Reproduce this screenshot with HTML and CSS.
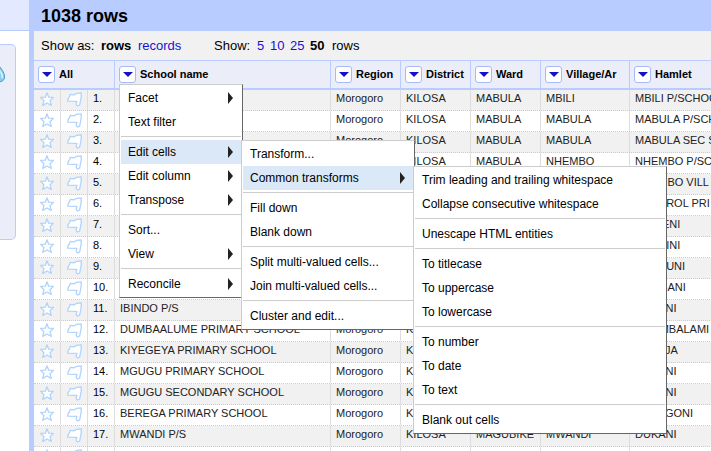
FILE: index.html
```html
<!DOCTYPE html>
<html lang="en">
<head>
<meta charset="utf-8">
<title>1038 rows</title>
<link rel="stylesheet" href="styles.css">
</head>
<body>
<svg class="defs" aria-hidden="true">
  <symbol id="star" viewBox="0 0 15 16"><path d="M7 .8 L8.700 5.200 L13.400 5.400 L10 8.700 L11.300 13.400 L7 11 L2.700 13.400 L4 8.700 L.6 5.400 L5.300 5.200 Z"/></symbol>
  <symbol id="flag" viewBox="0 0 15 16"><path d="M3.200 2.300 L7 2.900 L9.800 1.300 L14.200 .9 L14.200 5 L12.600 13.200 L10.500 14 L9.200 12.300 L9.900 9.400 L.7 9.200 L1.200 6.500 L2.600 4.700 Z"/></symbol>
</svg>
<div class="app">
  <aside class="side">
    <div class="side-top"></div>
    <div class="facet-box">
      <svg class="drop" viewBox="0 0 6 18"><path d="M-4 11 Q-2 6 0 1 Q5.500 8 4.500 12.500 Q3 16 -1 16" fill="#8fcdec" stroke="#4d9fcb"/><path d="M0 5 Q3 9 2 12" fill="none" stroke="#d9f2fc" stroke-width="1.500"/></svg>
    </div>
  </aside>
  <main class="main">
    <h1 class="title">1038 rows</h1>
    <div class="toolbar">
      <span class="label-as">Show as:</span><b class="mode">rows</b><a class="records">records</a>
      <span class="label-show">Show:</span><a class="n5">5</a><a class="n10">10</a><a class="n25">25</a><b class="n50">50</b><span>rows</span>
    </div>
    <div class="head">
      <div class="th"><i class="btn"></i>All</div>
      <div class="th"><i class="btn"></i>School name</div>
      <div class="th"><i class="btn"></i>Region</div>
      <div class="th"><i class="btn"></i>District</div>
      <div class="th"><i class="btn"></i>Ward</div>
      <div class="th"><i class="btn"></i>Village/Ar</div>
      <div class="th"><i class="btn"></i>Hamlet</div>
    </div>
    <div class="rows" id="rows"></div>
  </main>
</div>

<div class="menu menu-column">
  <div class="item sub">Facet</div>
  <div class="item">Text filter</div>
  <hr>
  <div class="item sub on">Edit cells</div>
  <div class="item sub">Edit column</div>
  <div class="item sub">Transpose</div>
  <hr>
  <div class="item">Sort...</div>
  <div class="item sub">View</div>
  <hr>
  <div class="item sub">Reconcile</div>
</div>
<div class="menu menu-cells">
  <div class="item">Transform...</div>
  <div class="item sub on">Common transforms</div>
  <hr>
  <div class="item">Fill down</div>
  <div class="item">Blank down</div>
  <hr>
  <div class="item">Split multi-valued cells...</div>
  <div class="item">Join multi-valued cells...</div>
  <hr>
  <div class="item">Cluster and edit...</div>
</div>
<div class="menu menu-common">
  <div class="item">Trim leading and trailing whitespace</div>
  <div class="item">Collapse consecutive whitespace</div>
  <hr>
  <div class="item">Unescape HTML entities</div>
  <hr>
  <div class="item">To titlecase</div>
  <div class="item">To uppercase</div>
  <div class="item">To lowercase</div>
  <hr>
  <div class="item">To number</div>
  <div class="item">To date</div>
  <div class="item">To text</div>
  <hr>
  <div class="item">Blank out cells</div>
</div>
<script src="rows.js"></script>
</body>
</html>
```
FILE: styles.css
```css
* { box-sizing: border-box; }
body { margin: 0; width: 711px; height: 451px; overflow: hidden; position: relative; background: #fff; font-family: "Liberation Sans", Arial, sans-serif; color: #000; }
.defs { display: none; }
.app { display: flex; height: 451px; }
.side { width: 29px; flex: none; }
.side-top { height: 31px; background: #e3e9ff; border-bottom: 1px solid #b9ccff; }
.facet-box { width: 16px; height: 196px; margin-top: 13px; padding-top: 21px; background: #ebedf9; border: 1px solid #b9ccff; border-left: 0; border-radius: 0 5px 5px 0; }
.drop { display: block; width: 6px; height: 18px; }
.main { flex: 1; min-width: 0; border-left: 5px solid #b9ccff; overflow: hidden; }
.title { margin: 0; height: 31px; padding-left: 7px; background: #b9ccff; font-size: 18px; line-height: 32px; }
.toolbar { display: flex; height: 29px; padding-left: 7px; background: #f1f1f1; font-size: 13px; line-height: 30px; white-space: nowrap; }
.toolbar a { color: #1a11cc; }
.label-as { width: 60px; }
.mode { width: 37px; }
.records { width: 76px; }
.label-show { width: 43px; }
.n5 { width: 13px; }
.n10, .n25 { width: 20px; }
.n50 { width: 22px; }
.head, .row { display: grid; width: 720px; }
.head { grid-template-columns: 81px 216px 70px 70px 70px 89px 124px; height: 30px; background: #ebedf9; border-top: 1px solid #b9ccff; border-bottom: 2px solid #b9ccff; }
.th { display: flex; align-items: center; gap: 4px; padding: 0 0 0 4px; border-right: 1px solid #b9ccff; font-size: 11px; font-weight: bold; white-space: nowrap; overflow: hidden; line-height: 27px; }
.btn { width: 17px; height: 17px; flex: none; display: flex; align-items: center; justify-content: center; background: #fff; border: 1px solid #a5b9fb; border-radius: 3px; }
.btn::after { content: ""; border: 5px solid transparent; border-top-color: #1111cc; border-bottom: 0; }
.row { grid-template-columns: 27px 27px 27px 216px 70px 70px 70px 89px 124px; height: 21px; border-bottom: 1px dotted #ccc; font-size: 11px; line-height: 17px; color: #222; }
.row:nth-child(odd) { background: #f1f1f1; }
.cell { border-right: 1px solid #ddd; padding-left: 5px; white-space: nowrap; overflow: hidden; }
.cell.mark { padding: 2px 0 0 6px; }
.cell.num { color: #000; padding-left: 5px; }
.mark svg { display: block; width: 15px; height: 16px; fill: #fff; stroke: #afd3ff; stroke-width: 1.3; stroke-linejoin: round; }
.menu { position: absolute; padding: 1px; background: #fff; border: 1px solid; border-color: #ccc #666 #666 #ccc; font-size: 12px; }
.menu-column { left: 119px; top: 84px; width: 124px; }
.menu-cells { left: 241px; top: 140px; width: 174px; }
.menu-common { left: 413px; top: 166px; width: 254px; }
.item { display: flex; align-items: center; justify-content: space-between; height: 24px; padding: 0 8px 0 7px; white-space: nowrap; }
.sub::after { content: ""; border: 6px solid transparent; border-left: 5px solid #222; border-right: 0; }
.on { background: #dbe8f8; }
hr { height: 1px; margin: 2px 0 3px; border: 0; background: #ccc; }
```
FILE: rows.js
```js
const rows = [
  ["", "KILOSA", "MABULA", "MBILI", "MBILI P/SCHOOL"],
  ["", "KILOSA", "MABULA", "MABULA", "MABULA P/SCHOOL"],
  ["", "KILOSA", "MABULA", "MABULA", "MABULA SEC SCHOOL"],
  ["", "KILOSA", "MABULA", "NHEMBO", "NHEMBO P/SCHOOL"],
  ["", "", "", "", "NHEMBO VILL"],
  ["", "", "", "", "CONTROL PRI"],
  ["", "", "", "", "MKWENI"],
  ["", "", "", "", "MASAINI"],
  ["", "", "", "", "MABEUNI"],
  ["", "", "", "", "MGASANI"],
  ["IBINDO P/S", "", "", "", "DUKANI"],
  ["DUMBAALUME PRIMARY SCHOOL", "KILOSA", "", "", "KWAMBALAMI"],
  ["KIYEGEYA PRIMARY SCHOOL", "KILOSA", "", "", "KABUJA"],
  ["MGUGU PRIMARY SCHOOL", "KILOSA", "", "", "DUKANI"],
  ["MGUGU SECONDARY SCHOOL", "KILOSA", "", "", "DUKANI"],
  ["BEREGA PRIMARY SCHOOL", "KILOSA", "", "", "BEREGONI"],
  ["MWANDI P/S", "KILOSA", "MAGUBIKE", "MWANDI", "DUKANI"],
  ["", "", "", "", ""]
];
const icon = id => `<div class="cell mark"><svg><use href="#${id}"/></svg></div>`;
document.getElementById("rows").innerHTML = rows.map(([school, district, ward, village, hamlet], i) =>
  `<div class="row">${icon("star")}${icon("flag")}<div class="cell num">${i + 1}.</div>` +
  [school, i === 17 ? "" : "Morogoro", district, ward, village, hamlet].map(t => `<div class="cell">${t}</div>`).join("") +
  "</div>").join("");
```
